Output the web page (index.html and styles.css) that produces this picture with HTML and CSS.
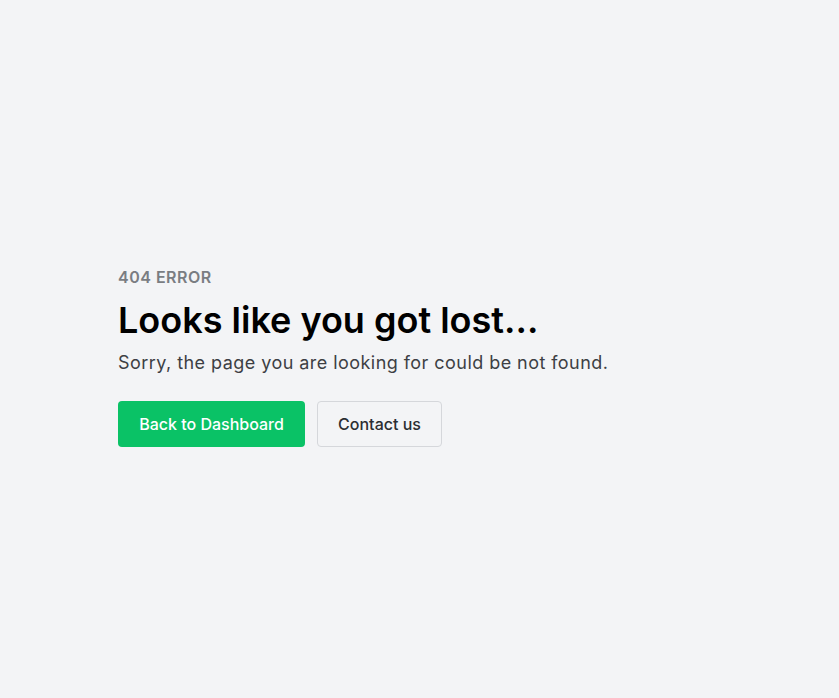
FILE: index.html
```html
<!DOCTYPE html>
<html lang="en">
<head>
<meta charset="utf-8">
<title>404</title>
<link rel="stylesheet" href="styles.css">
</head>
<body>
<main class="page">
  <section class="content">
    <p class="eyebrow">404 ERROR</p>
    <h1 class="title">Looks like you got lost...</h1>
    <p class="lead">Sorry, the page you are looking for could be not found.</p>
    <div class="actions">
      <a class="btn btn-primary" href="#">Back to Dashboard</a>
      <a class="btn btn-secondary" href="#">Contact us</a>
    </div>
  </section>
</main>
</body>
</html>
```

FILE: styles.css
```css
* { box-sizing: border-box; }
html, body { margin: 0; padding: 0; }
body {
  background: #f3f4f6;
  font-family: Inter, "Liberation Sans", sans-serif;
  color: #111;
}
.page {
  min-height: 698px;
  display: flex;
  align-items: center;
  padding: 16px 118px 0;
}
.content {
  display: flex;
  flex-direction: column;
  align-items: flex-start;
}
.eyebrow {
  margin: 0;
  font-size: 16px;
  font-weight: 600;
  color: #7a7d82;
  line-height: 20px;
  letter-spacing: 0.5px;
}
.title {
  margin: 11px 0 0;
  font-size: 36px;
  font-weight: 600;
  color: #000;
  line-height: 44px;
}
.lead {
  margin: 8px 0 0;
  font-size: 18px;
  color: #3d3f44;
  line-height: 26px;
  letter-spacing: 0.45px;
}
.actions {
  margin-top: 25px;
  display: flex;
  gap: 12px;
}
.btn {
  display: inline-flex;
  align-items: center;
  justify-content: center;
  height: 46px;
  padding: 0 20px;
  border-radius: 4px;
  font-size: 16px;
  font-weight: 500;
  text-decoration: none;
}
.btn-primary {
  background: #0ac266;
  color: #fff;
  width: 187px;
}
.btn-secondary {
  border: 1px solid #d5d7db;
  color: #2b2d31;
  width: 125px;
}
```
